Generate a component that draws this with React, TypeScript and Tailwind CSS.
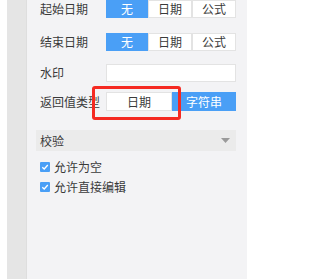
const font = { fontFamily: '"Noto Sans CJK SC", "Noto Sans", sans-serif' }

const Segmented = ({ options, active }: { options: string[]; active: number }) => (
  <div className="flex h-[18px] w-[130px] bg-white">
    {options.map((o, i) => (
      <div
        key={o}
        className={`flex flex-1 items-center justify-center text-[12px] leading-none ${
          i === active ? 'bg-[#4a9ff6] text-white' : 'border border-[#e3e3e3] bg-white text-[#3a3a3a]'
        }`}
      >
        {o}
      </div>
    ))}
  </div>
)

const Row = ({ label, children, className }: { label: string; children: React.ReactNode; className?: string }) => (
  <div className={`flex items-center pl-[4px] ${className ?? ''}`}>
    <div className="w-[66px] shrink-0 text-[12px] leading-none text-[#3a3a3a]">{label}</div>
    {children}
  </div>
)

const Check = ({ label, className }: { label: string; className?: string }) => (
  <div className={`flex items-center gap-[4px] pl-[4px] ${className ?? ''}`}>
    <div className="flex h-[10px] w-[10px] items-center justify-center rounded-[1px] bg-[#4a9ff6]">
      <svg width="8" height="8" viewBox="0 0 8 8">
        <path d="M1.3 4.2 L3.2 6 L6.8 2" stroke="white" strokeWidth="1.3" fill="none" />
      </svg>
    </div>
    <span className="text-[12px] leading-none text-[#3a3a3a]">{label}</span>
  </div>
)

export default function App() {
  return (
    <div className="flex h-[279px] w-[310px] bg-white" style={font}>
      <div className="w-[7px] shrink-0 bg-white" />
      <div className="w-[20px] shrink-0 border-r border-[#dedede] bg-[#e5e5e5]" />
      <div className="relative w-[220px] shrink-0 bg-[#f3f3f5] pl-[9px] pr-[11px]">
        <Row label="起始日期" className="mt-0">
          <Segmented options={['无', '日期', '公式']} active={0} />
        </Row>
        <Row label="结束日期" className="mt-[15px]">
          <Segmented options={['无', '日期', '公式']} active={0} />
        </Row>
        <Row label="水印" className="mt-[13px]">
          <div className="h-[18px] w-[130px] border border-[#e3e3e3] bg-white" />
        </Row>
        <Row label="返回值类型" className="mt-[10px]">
          <div className="flex h-[19px] w-[130px]">
            <div className="flex flex-1 items-center justify-center border border-[#e3e3e3] bg-white text-[12px] leading-none text-[#3a3a3a]">
              日期
            </div>
            <div className="flex flex-1 items-center justify-center bg-[#4a9ff6] text-[12px] leading-none text-white">
              字符串
            </div>
          </div>
        </Row>
        <div className="mt-[19px] flex h-[21px] items-center justify-between bg-[#ebebeb] pl-[4px] pr-[6px]">
          <span className="text-[12px] leading-none text-[#3a3a3a]">校验</span>
          <svg width="9" height="5" viewBox="0 0 9 5">
            <path d="M0 0 H9 L4.5 5 Z" fill="#9a9a9a" />
          </svg>
        </div>
        <Check label="允许为空" className="mt-[10px]" />
        <Check label="允许直接编辑" className="mt-[8px]" />
        <div className="absolute left-[65px] top-[86px] h-[34px] w-[89px] rounded-[3px] border-[3px] border-[#f52a22]" />
      </div>
    </div>
  )
}
